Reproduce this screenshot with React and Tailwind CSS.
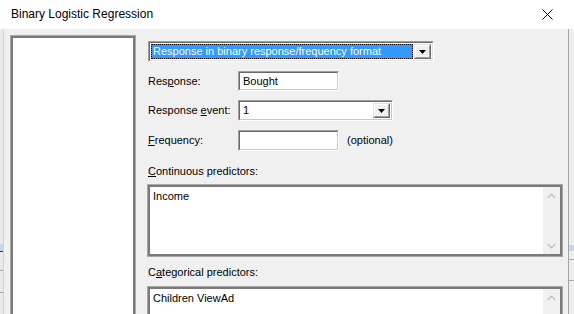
import React from 'react';

const ui = { fontFamily: '"Liberation Sans", Arial, sans-serif' };

function Sunken({ className = '', children }) {
  return (
    <div className={`shrink-0 border border-t-[#a0a0a0] border-l-[#a0a0a0] border-b-white border-r-white ${className}`}>
      <div className="w-full h-full border border-t-[#696969] border-l-[#696969] border-b-[#c8c8c8] border-r-[#c8c8c8] bg-white flex">
        {children}
      </div>
    </div>
  );
}

function DropButton() {
  return (
    <div className="w-[17px] h-full border border-t-[#e3e3e3] border-l-[#e3e3e3] border-b-[#696969] border-r-[#696969]">
      <div className="w-full h-full border border-t-white border-l-white border-b-[#a0a0a0] border-r-[#a0a0a0] bg-[#f0f0f0] flex items-center justify-center">
        <svg width="7" height="4" viewBox="0 0 7 4">
          <path d="M0 0h7L3.5 4z" fill="#000" />
        </svg>
      </div>
    </div>
  );
}

function Chevron({ up }) {
  return (
    <svg width="9" height="6" viewBox="0 0 9 6">
      <path d={up ? 'M0.8 5L4.5 1.3L8.2 5' : 'M0.8 1L4.5 4.7L8.2 1'} fill="none" stroke="#c2c2c2" strokeWidth="1.4" />
    </svg>
  );
}

function ListBox({ text, className = '' }) {
  return (
    <div className={`shrink-0 border border-[#a8a8a8] ${className}`}>
      <div className="w-full h-full border-2 border-[#7a7a7a] bg-white flex">
        <div className="flex-1 pl-[3px] pt-[3px] leading-[13px]">{text}</div>
        <div className="w-[17px] bg-[#f0f0f0] flex flex-col justify-between">
          <div className="h-[17px] flex items-center justify-center"><Chevron up /></div>
          <div className="h-[17px] flex items-center justify-center"><Chevron /></div>
        </div>
      </div>
    </div>
  );
}

function Label({ pre, u, post, className = '' }) {
  return (
    <span className={className}>
      {pre}<span className="underline underline-offset-[1px]">{u}</span>{post}
    </span>
  );
}

export default function App() {
  return (
    <div className="w-[574px] h-[314px] overflow-hidden flex flex-col text-[11px] text-black" style={ui}>
      {/* title bar */}
      <div className="h-[29px] shrink-0 bg-white flex items-center justify-between pl-[11px] pr-[21px]">
        <span className="text-[12px] -mt-[1px]">Binary Logistic Regression</span>
        <svg width="11" height="11" viewBox="0 0 11 11" className="-mt-[1px]">
          <path d="M0.5 0.5L10.5 10.5M10.5 0.5L0.5 10.5" stroke="#000" strokeWidth="1" />
        </svg>
      </div>

      <div className="flex-1 flex min-h-0">
        {/* app behind, left */}
        <div className="w-[3px] flex flex-col bg-[#e9e9e9]">
          <div className="h-[215px]" />
          <div className="h-[7px] bg-[#c6d6e8]" />
          <div className="h-px bg-[#3c3c3c]" />
          <div className="h-[18px]" />
          <div className="h-px bg-[#a8a8a8]" />
          <div className="h-[21px]" />
          <div className="h-px bg-[#a8a8a8]" />
        </div>

        {/* dialog body */}
        <div className="flex-1 bg-[#f0f0f0] border-l border-[#d2d2d2] border-r border-r-[#a4a4a4] flex pl-[6px] pt-[6px]">
          <div className="w-[126px] h-[300px] shrink-0 border border-[#a8a8a8]">
            <div className="w-full h-full border-2 border-[#7a7a7a] bg-white" />
          </div>

          <div className="ml-[11px] w-[416px] flex flex-col pt-[6px]">
            {/* format combo */}
            <div className="shrink-0 ml-px w-[286px] h-[21px] border border-t-[#a0a0a0] border-l-[#a0a0a0] border-b-white border-r-white">
              <div className="w-full h-full border border-t-[#696969] border-l-[#696969] border-b-[#e3e3e3] border-r-[#e3e3e3] bg-white flex p-px gap-px">
                <div className="flex-1 bg-[#c86a10]">
                  <div className="h-full border border-dotted border-black bg-[#3399ff] bg-clip-padding text-white leading-[13px] pl-px">
                    Response in binary response/frequency format
                  </div>
                </div>
                <DropButton />
              </div>
            </div>

            <div className="shrink-0 ml-px mt-[9px] flex items-center h-[20px]">
              <Label pre="Res" u="p" post="onse:" className="w-[90px]" />
              <Sunken className="w-[101px] h-[20px]">
                <span className="pl-[3px] leading-[16px]">Bought</span>
              </Sunken>
            </div>

            <div className="shrink-0 ml-px mt-[9px] flex items-center h-[21px]">
              <Label pre="Response " u="e" post="vent:" className="w-[90px]" />
              <Sunken className="w-[155px] h-[21px]">
                <span className="flex-1 pl-[3px] leading-[17px]">1</span>
                <div className="py-px pr-px"><DropButton /></div>
              </Sunken>
            </div>

            <div className="shrink-0 ml-px mt-[9px] flex items-center h-[21px]">
              <Label pre="" u="F" post="requency:" className="w-[90px]" />
              <Sunken className="w-[101px] h-[21px]" />
              <span className="ml-[8px]">(optional)</span>
            </div>

            <div className="shrink-0 mt-[14px] ml-px h-[13px] leading-[13px]">
              <Label pre="" u="C" post="ontinuous predictors:" />
            </div>
            <ListBox text="Income" className="mt-[6px] h-[73px]" />

            <div className="shrink-0 mt-[9px] ml-px h-[13px] leading-[13px]">
              <Label pre="C" u="a" post="tegorical predictors:" />
            </div>
            <ListBox text="Children ViewAd" className="mt-[7px] h-[73px]" />
          </div>
        </div>

        {/* app behind, right */}
        <div className="w-[5px] flex flex-col bg-[#eeeeee]">
          <div className="h-[216px]" />
          <div className="h-[6px] bg-[#c6d6e8]" />
          <div className="h-[8px]" />
          <div className="h-px bg-[#a8a8a8]" />
          <div className="h-[20px]" />
          <div className="h-px bg-[#a8a8a8]" />
        </div>
      </div>
    </div>
  );
}
